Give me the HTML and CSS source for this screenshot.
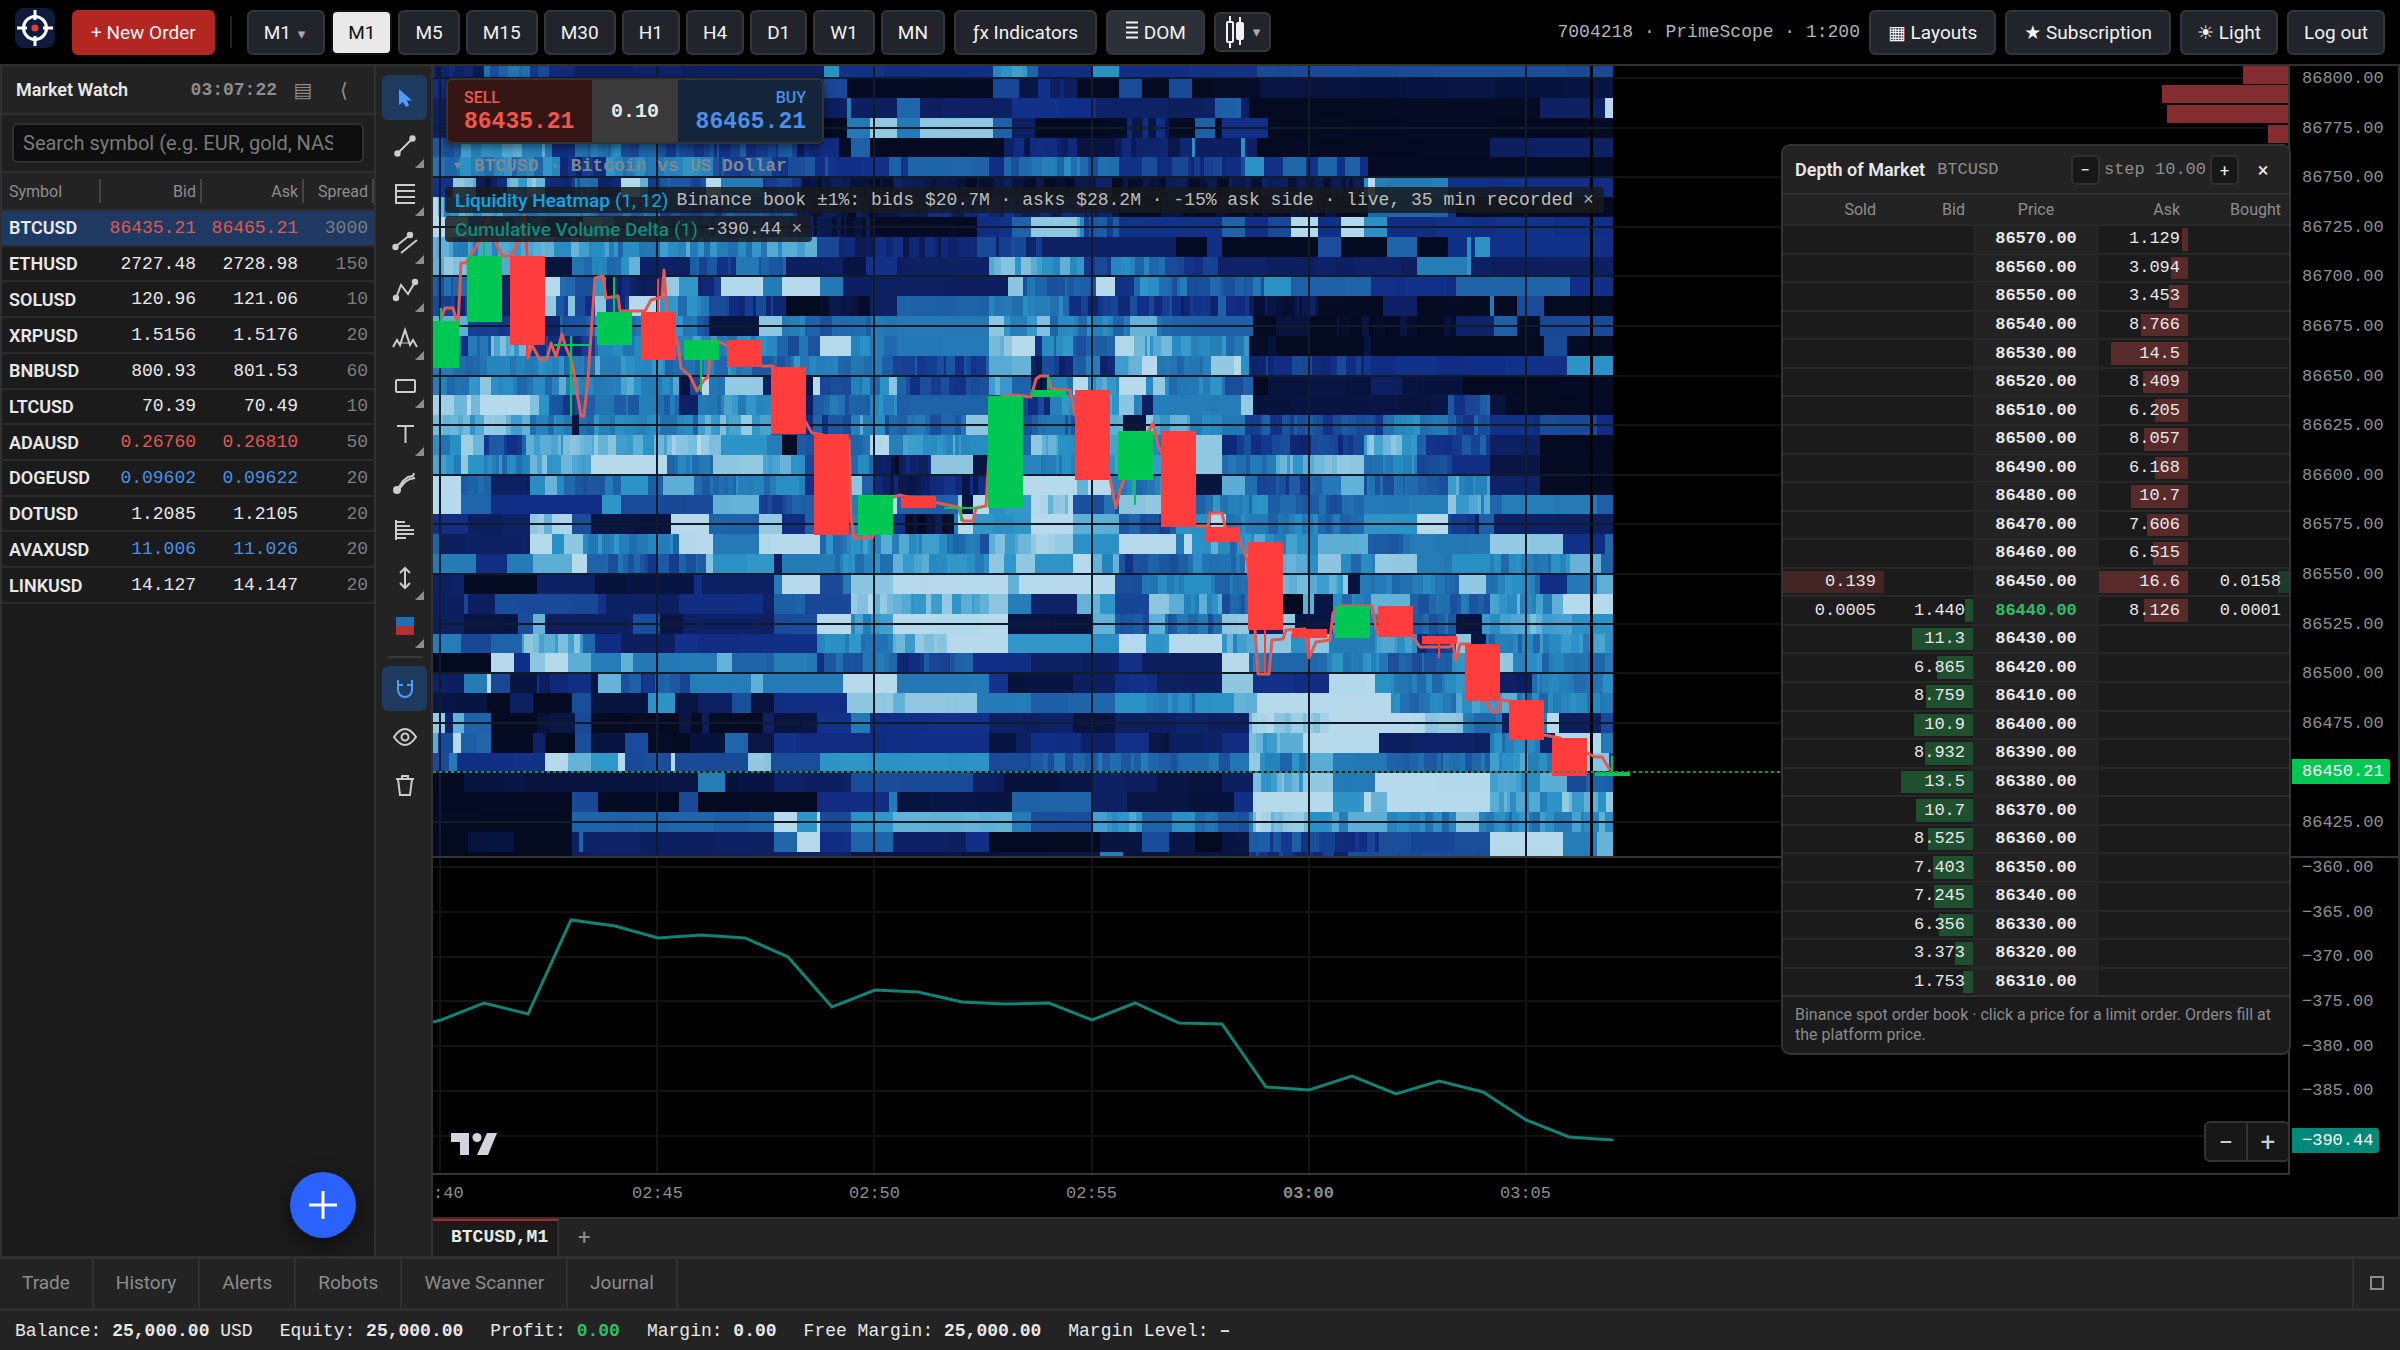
FILE: index.html
```html
<!DOCTYPE html>
<html lang="en">
<head>
<meta charset="utf-8">
<title>PrimeScope</title>
<link rel="stylesheet" href="styles.css">
</head>
<body>
<div class="app">
  <header class="topbar">
    <svg class="logo" viewBox="0 0 40 40" aria-hidden="true">
      <rect width="40" height="40" rx="9" fill="#0f1b3d"/>
      <circle cx="20" cy="20" r="11.500" fill="none" stroke="#fff" stroke-width="3"/>
      <path d="M20 2v10M20 28v10M2 20h10M28 20h10" stroke="#fff" stroke-width="3"/>
      <circle cx="20" cy="20" r="3.500" fill="#e23b35"/>
    </svg>
    <button class="btn primary">+ New Order</button>
    <span class="vsep"></span>
    <div class="frames">
      <button class="btn">M1 <small>▾</small></button>
      <button class="btn on">M1</button>
      <button class="btn">M5</button>
      <button class="btn">M15</button>
      <button class="btn">M30</button>
      <button class="btn">H1</button>
      <button class="btn">H4</button>
      <button class="btn">D1</button>
      <button class="btn">W1</button>
      <button class="btn">MN</button>
    </div>
    <div class="actions">
      <button class="btn wide">ƒx Indicators</button>
      <button class="btn wide lit"><svg width="14" height="18" viewBox="0 0 14 18"><path d="M1 1.500h12M1 6.500h12M1 11.500h12M1 16.500h12" stroke="#f2f2f2" stroke-width="2"/></svg> DOM</button>
      <button class="btn short" aria-label="Chart type">
        <svg width="20" height="34" viewBox="0 0 20 34" fill="none" stroke="#f2f2f2" stroke-width="2"><path d="M5 1v6M5 27v6M15 2v6M15 24v6"/><rect x="2" y="7" width="6" height="20" rx="1"/><rect x="12" y="8" width="6" height="16" rx="1" fill="#f2f2f2"/></svg>
        <small>▾</small>
      </button>
    </div>
    <span class="account">7004218 · PrimeScope · 1:200</span>
    <div class="actions">
      <button class="btn wide">▦ Layouts</button>
      <button class="btn wide">★ Subscription</button>
      <button class="btn">☀ Light</button>
      <button class="btn">Log out</button>
    </div>
  </header>

  <div class="main">
    <aside class="watch">
      <div class="watch-head">
        <h2>Market Watch</h2>
        <span class="clock">03:07:22</span>
        <button class="plain" aria-label="List view">▤</button>
        <button class="plain" aria-label="Collapse">⟨</button>
      </div>
      <div class="search"><input type="text" aria-label="Search symbol" placeholder="Search symbol (e.g. EUR, gold, NAS)"></div>
      <table class="quotes">
        <colgroup><col class="q-sym"><col class="q-bid"><col class="q-ask"><col class="q-spr"></colgroup>
        <thead><tr><th>Symbol</th><th>Bid</th><th>Ask</th><th>Spread</th></tr></thead>
        <tbody id="quotes"></tbody>
      </table>
      <button class="fab" aria-label="Add"><svg width="30" height="30" viewBox="0 0 30 30"><path d="M15 1v28M1 15h28" stroke="#fff" stroke-width="3"/></svg></button>
    </aside>

    <nav class="tools" aria-label="Drawing tools">
      <button class="tool on" aria-label="Cursor"><svg viewBox="0 0 24 24"><path d="M6 3v16l4-3 3 5 3-1.500-2-5h5z" fill="#4d9bff" stroke="none"/></svg></button>
      <button class="tool more" aria-label="Trend line"><svg viewBox="0 0 24 24"><path d="M5 19L19 5"/><circle cx="4.500" cy="19.500" r="2.200" fill="#ccc"/><circle cx="19.500" cy="4.500" r="2.200" fill="#ccc"/></svg></button>
      <button class="tool more" aria-label="Fibonacci"><svg viewBox="0 0 24 24"><path d="M2 3h20M2 9h20M2 15h20M2 21h20M3 3v18"/></svg></button>
      <button class="tool more" aria-label="Channel"><svg viewBox="0 0 24 24"><path d="M2 17L17 5M8 23L24 10"/><circle cx="2.500" cy="17" r="2.200" fill="#ccc"/><circle cx="17" cy="5" r="2.200" fill="#ccc"/></svg></button>
      <button class="tool more" aria-label="Wave"><svg viewBox="0 0 24 24"><path d="M3 20L8 7l7 9 7-12"/><circle cx="3" cy="20" r="2.200" fill="#ccc"/><circle cx="22" cy="4" r="2.200" fill="#ccc"/></svg></button>
      <button class="tool more" aria-label="Pattern"><svg viewBox="0 0 24 24"><path d="M0 21l4-7 3 5 5-15 5 15 3-5 4 7"/><path d="M5 17h13" stroke-width="1"/></svg></button>
      <button class="tool more" aria-label="Rectangle"><svg viewBox="0 0 24 24"><rect x="3" y="6" width="19" height="12" rx="1"/></svg></button>
      <button class="tool more" aria-label="Text"><svg viewBox="0 0 24 24"><path d="M4 4h17M12.500 4v17"/></svg></button>
      <button class="tool" aria-label="Brush"><svg viewBox="0 0 24 24"><path d="M4 20l6-9 5-4 5-1 1-3M6 19l6-7 5-3 5-1"/><circle cx="4" cy="20" r="3" fill="#ccc"/></svg></button>
      <button class="tool" aria-label="Volume profile"><svg viewBox="0 0 24 24"><path d="M3 2v20M3 4h9M3 8h14M3 12h18M3 16h18M3 20h10"/></svg></button>
      <button class="tool more" aria-label="Measure"><svg viewBox="0 0 24 24"><path d="M12 2v20M7 7l5-5 5 5M7 17l5 5 5-5"/></svg></button>
      <button class="tool more" aria-label="Position"><svg viewBox="0 0 24 24"><path d="M3 3h18v9H3z" fill="#1f6fb5" stroke="none"/><path d="M3 12h18v9H3z" fill="#b8302e" stroke="none"/></svg></button>
      <hr>
      <button class="tool on" aria-label="Magnet"><svg viewBox="0 0 24 24"><path d="M5 3v10a7 7 0 0 0 14 0V3M5 8h5M14 8h5" stroke="#4d9bff"/></svg></button>
      <button class="tool" aria-label="Hide drawings"><svg viewBox="0 0 24 24"><path d="M1 12q11-16 22 0q-11 16-22 0z"/><circle cx="12" cy="12" r="3.500"/></svg></button>
      <button class="tool" aria-label="Delete drawings"><svg viewBox="0 0 24 24"><path d="M3 6h18M9 6V3h6v3M5 6l2 16h10l2-16"/></svg></button>
    </nav>

    <section class="chart-area">
      <div class="chart">
        <div class="plot">
          <svg id="plot" viewBox="433 66 1855 1107" preserveAspectRatio="none" aria-label="BTCUSD chart"></svg>
          <div class="ticket">
            <button class="sell"><span>SELL</span><b>86435.21</b></button>
            <input type="text" aria-label="Volume" value="0.10">
            <button class="buy"><span>BUY</span><b>86465.21</b></button>
          </div>
          <div class="legend">
            <p class="symbol">▾ BTCUSD · Bitcoin vs US Dollar</p>
            <p class="study heat"><b>Liquidity Heatmap</b><i>(1, 12)</i><span>Binance book ±1%: bids $20.7M · asks $28.2M · -15% ask side · live, 35 min recorded</span><button class="plain" aria-label="Remove heatmap">×</button></p>
            <p class="study cvd"><b>Cumulative Volume Delta</b><i>(1)</i><span>-390.44</span><button class="plain" aria-label="Remove delta">×</button></p>
          </div>
          <svg class="tv" viewBox="0 0 46 24" aria-hidden="true"><path d="M0 1h18v22H9V10H0z M36 1h10l-9 22H26z" fill="#d1d4dc"/><circle cx="26" cy="5.500" r="4.500" fill="#d1d4dc"/></svg>
          <div class="zoom"><button aria-label="Zoom out">−</button><button aria-label="Zoom in">+</button></div>
        </div>
        <div class="scale">
          <div class="prices" id="prices"></div>
          <div class="deltas"><span>−360.00</span><span>−365.00</span><span>−370.00</span><span>−375.00</span><span>−380.00</span><span>−385.00</span><span></span></div>
          <span class="tag last">86450.21</span>
          <span class="tag delta">−390.44</span>
        </div>
        <div class="times"><span>:40</span><span>02:45</span><span>02:50</span><span>02:55</span><span><b>03:00</b></span><span>03:05</span></div>

        <section class="dom">
          <div class="dom-head">
            <h2>Depth of Market</h2><span class="sym">BTCUSD</span>
            <button class="step" aria-label="Smaller step">−</button><span class="stepv">step 10.00</span><button class="step" aria-label="Larger step">+</button>
            <button class="plain close" aria-label="Close">×</button>
          </div>
          <table>
            <colgroup><col class="d-o"><col class="d-i"><col class="d-p"><col class="d-i"><col class="d-o"></colgroup>
            <thead><tr><th>Sold</th><th>Bid</th><th>Price</th><th>Ask</th><th>Bought</th></tr></thead>
            <tbody id="dom"></tbody>
          </table>
          <p>Binance spot order book · click a price for a limit order. Orders fill at the platform price.</p>
        </section>
      </div>
      <div class="chart-tabs"><button class="ctab">BTCUSD,M1</button><button class="plain">+</button></div>
    </section>
  </div>

  <nav class="dock">
    <button>Trade</button><button>History</button><button>Alerts</button><button>Robots</button><button>Wave Scanner</button><button>Journal</button>
    <button class="max" aria-label="Maximise"><svg width="14" height="14" viewBox="0 0 14 14"><rect x="1" y="1" width="12" height="12" fill="none" stroke="#8a8a8a" stroke-width="2"/></svg></button>
  </nav>
  <footer class="status">
    <span>Balance: <b>25,000.00</b> USD</span><span>Equity: <b>25,000.00</b></span><span>Profit: <b class="up">0.00</b></span><span>Margin: <b>0.00</b></span><span>Free Margin: <b>25,000.00</b></span><span>Margin Level: <b>–</b></span>
  </footer>
</div>
<script src="app.js"></script>
</body>
</html>
```
FILE: styles.css
```css
* { box-sizing: border-box; }
body { margin: 0; background: #000; color: #e8e8e8; font-family: Roboto, "Liberation Sans", "DejaVu Sans", sans-serif; font-size: 19px; }
button, input { font: inherit; color: inherit; }
button { cursor: pointer; padding: 0; border: 0; background: none; }
h2, p { margin: 0; }
.app { display: flex; flex-direction: column; height: 100vh; }

.topbar { display: flex; align-items: center; flex: none; height: 66px; padding: 0 15px; border-bottom: 2px solid #303030; background: #000; }
.logo { width: 40px; height: 40px; margin: 0 17px 8px 0; }
.btn { height: 45px; padding: 0 15px; border: 2px solid #343638; border-radius: 6px; background: #21242a; color: #f2f2f2; white-space: nowrap; }
.btn small { margin-left: 2px; color: #aaa; font-size: 15px; }
.frames small { margin-right: 3px; }
.btn.primary { padding: 0 17px; border-color: #b32622; background: #b32622; }
.btn.on { border-color: #101010; background: #e9e9ea; color: #111; }
.btn.wide { padding: 0 17px; }
.btn.lit { background: #2c3138; }
.btn.short { display: flex; align-items: center; gap: 6px; height: 40px; padding: 0 9px; }
.vsep { width: 2px; height: 32px; margin: 0 15px; background: #222; }
.frames { display: flex; gap: 6px; }
.actions { display: flex; align-items: center; gap: 9px; margin-left: 9px; }
.account { margin-left: auto; color: #b4b4b4; }
.account, .clock, .quotes td, .legend, .status, .ctab { font-family: "Liberation Mono", "DejaVu Sans Mono", monospace; font-size: 18px; }

.main { display: flex; flex: 1; min-height: 0; }
.watch { position: relative; flex: none; width: 376px; border: solid #303030; border-width: 0 2px; background: #1b1b1b; }
.watch-head { display: flex; align-items: center; height: 49px; padding: 0 15px 0 14px; border-bottom: 2px solid #303030; background: #232323; }
.watch-head h2 { flex: 1; font-size: 18px; font-weight: 600; }
.clock { color: #8d8d8d; font-weight: 600; }
.plain { color: #8d8d8d; }
.watch-head .plain { width: 40px; margin-left: 6px; margin-right: -5px; font-size: 20px; }
.search { padding: 8px 10px; height: 58px; border-bottom: 2px solid #303030; background: #1f1f1f; }
.search input { display: block; width: 100%; height: 40px; padding: 0 29px 0 9px; border: 2px solid #303030; border-radius: 6px; background: #0e0e0e; font-size: 20px; }
.search input::placeholder { color: #7a7a7a; }
.quotes { width: 100%; height: 431px; border-collapse: collapse; table-layout: fixed; }
.q-sym { width: 99px; } .q-bid { width: 101px; } .q-ask { width: 102px; } .q-spr { width: 70px; }
.quotes thead tr { height: 37px; background: #232323; }
.quotes th { padding: 0 6px; color: #8d8d8d; font-size: 16px; font-weight: 400; text-align: right; background: linear-gradient(#444, #444) right / 2px 24px no-repeat; }
.quotes th:first-child, .quotes td:first-child { padding-left: 7px; text-align: left; }
.quotes td { padding: 0 6px; border-top: 2px solid #2b2b2b; border-bottom: 2px solid #2b2b2b; text-align: right; }
.quotes td:first-child { font-family: Roboto, sans-serif; font-weight: 600; padding-right: 0; }
.quotes td:last-child { color: #7d7d7d; }
.quotes .sel { background: #1e3a63; }
.quotes .dn { color: #e0574f; } .quotes .bl { color: #4a90e2; }
.fab { position: absolute; right: 18px; bottom: 18px; display: grid; place-items: center; width: 66px; height: 66px; border-radius: 50%; background: #2962ff; box-shadow: 0 6px 18px rgba(0,0,0,.5); }

.tools { display: flex; flex-direction: column; align-items: center; gap: 3px; flex: none; width: 57px; padding: 9px 0 0 2px; border-right: 2px solid #303030; background: #232323; }
.tool { position: relative; display: grid; place-items: center; flex: none; width: 45px; height: 45px; border-radius: 6px; }
.tool svg { width: 24px; height: 24px; fill: none; stroke: #ccc; stroke-width: 2; overflow: visible; }
.tool.on { background: #1f3a5f; }
.tool.more::after { content: ""; position: absolute; right: 3px; bottom: 0; border: solid transparent; border-width: 0 0 9px 9px; border-bottom-color: #8d8d8d; }
.tools hr { width: 34px; height: 2px; margin: 5px 0; border: 0; background: #3a3a3a; }

.chart-area { display: flex; flex-direction: column; flex: 1; min-width: 0; }
.chart { position: relative; display: grid; grid-template: 1fr 42px / 1fr 108px; flex: 1; min-height: 0; border-right: 2px solid #303030; background: #000; }
.plot { position: relative; min-height: 0; border: solid #363636; border-width: 0 2px 2px 0; }
#plot { position: absolute; inset: 0; width: 100%; height: 100%; }
.scale { position: relative; font: 17px "Liberation Mono", monospace; line-height: 20px; color: #8f8f8f; }
.prices, .deltas { display: flex; flex-direction: column; justify-content: space-between; padding-left: 12px; }
.prices { height: 767px; padding-top: 3px; }
.deltas { height: 290px; margin-top: 23px; border-top: 2px solid #363636; }
.prices span, .deltas span { height: 20px; }
.tag { position: absolute; left: 2px; height: 25px; padding: 0 6px 0 10px; border-radius: 0 3px 3px 0; line-height: 25px; color: #fff; }
.last { top: 693px; background: #00c853; }
.delta { top: 1062px; background: #00897b; }
.times { display: flex; overflow: hidden; font: 17px "Liberation Mono", monospace; line-height: 38px; color: #8f8f8f; text-align: center; }
.times span { flex: none; width: 217px; }
.times span:first-child { width: 116px; text-align: left; }

.ticket { position: absolute; left: 13px; top: 12px; display: flex; width: 378px; height: 66px; border: 2px solid #333; border-radius: 6px; overflow: hidden; background: #3a3a3a; box-shadow: 0 3px 8px rgba(0,0,0,.5); }
.ticket button { display: flex; flex-direction: column; justify-content: center; flex: none; width: 144px; padding: 0 16px; gap: 4px; line-height: 24px; }
.ticket span { font-size: 16px; font-weight: 500; line-height: 17px; }
.ticket b { font: bold 23px "Liberation Mono", monospace; line-height: 24px; }
.ticket .sell { color: #f0564d; background: #351614; align-items: flex-start; }
.ticket .buy { color: #4a90e8; background: #14243a; align-items: flex-end; }
.ticket input { flex: 1; min-width: 0; padding: 0; border: 0; background: #3a3a3a; font: bold 20px "Liberation Mono", monospace; text-align: center; }
.legend { position: absolute; left: 12px; top: 87px; display: flex; flex-direction: column; align-items: flex-start; gap: 3px; }
.symbol { height: 31px; padding-left: 7px; color: #7f8891; font-weight: bold; line-height: 26px; }
.study { display: flex; align-items: center; height: 26px; padding: 0 10px; border-radius: 4px; background: rgba(24,26,28,.84); white-space: pre; color: #bdbdbd; }
.study b, .study i { font-family: Roboto, sans-serif; font-size: 19px; font-style: normal; font-weight: 500; }
.study i { font-weight: 400; margin: 0 8px 0 5px; }
.study .plain { margin-left: 10px; color: #aaa; }
.heat b, .heat i { color: #0ea5e9; }
.cvd b, .cvd i { color: #0b8f7c; }
.tv { position: absolute; left: 18px; bottom: 17px; width: 46px; height: 24px; }
.zoom { position: absolute; right: -2px; bottom: 11px; display: flex; border: 2px solid #333; border-radius: 6px; background: #171717; }
.zoom button { width: 40px; height: 37px; font-size: 26px; color: #ccc; }
.zoom button + button { width: 42px; border-left: 2px solid #333; }

.dom { position: absolute; right: 107px; top: 78px; width: 510px; border: 2px solid #333; border-radius: 9px; background: #1b1b1b; overflow: hidden; }
.dom-head { display: flex; align-items: center; height: 49px; padding: 0 19px 0 12px; border-bottom: 2px solid #303030; background: #232323; }
.dom-head h2 { font-size: 18px; font-weight: 600; }
.sym, .stepv { font: 17px "Liberation Mono", monospace; color: #8d8d8d; }
.sym { flex: 1; margin-left: 12px; }
.stepv { margin: 0 4px; }
.step { width: 29px; height: 30px; border: 2px solid #303030; border-radius: 5px; background: #171717; font-size: 17px; }
.close { width: 14px; margin-left: 17px; color: #eee; font-size: 20px; }
.dom table { width: 100%; height: 800px; border-collapse: collapse; table-layout: fixed; }
.d-o { width: 101px; } .d-i { width: 89px; } .d-p { width: 126px; }
.dom thead tr { height: 30px; background: #232323; }
.dom th { padding: 0 8px; color: #8d8d8d; font-size: 16px; font-weight: 400; text-align: right; }
.dom th:nth-child(3) { text-align: center; }
.dom td { position: relative; padding: 0 8px; border-top: 2px solid #282828; font: 17px "Liberation Mono", monospace; line-height: 20px; text-align: right; }
.dom td:nth-child(3) { padding: 0; background: #232323; font-weight: bold; text-align: center; }
.dom .bar { position: absolute; right: 0; top: 2px; bottom: 2px; }
.dom .bar + span { position: relative; }
.c1 .bar { background: #432525; } .c2 .bar { background: #1f4f2f; } .c4 .bar { background: #592a2a; } .c5 .bar { background: #1e3a28; }
.up { color: #2fbf64; }
.dom p { padding: 8px 12px; border-top: 2px solid #303030; color: #8a8a8a; font-size: 16px; line-height: 20px; }

.chart-tabs { display: flex; flex: none; height: 39px; border-top: 2px solid #303030; background: #232323; }
.ctab { padding: 0 9px 3px 18px; border-top: 2px solid #b32622; border-right: 2px solid #303030; background: #1b1b1b; font-weight: bold; }
.chart-tabs .plain { width: 50px; font-size: 22px; }
.dock { display: flex; flex: none; height: 52px; border-top: 3px solid #303030; background: #232323; color: #8d8d8d; }
.dock button { padding: 0 22px 3px; border-right: 2px solid #303030; }
.dock .max { width: 48px; padding: 0; margin-left: auto; border-left: 2px solid #303030; border-right: 0; }
.status { display: flex; gap: 27px; flex: none; height: 42px; padding: 0 15px; border-top: 3px solid #303030; background: #232323; line-height: 40px; white-space: pre; }
```
FILE: app.js
```js
const quotes = [
  ["BTCUSD", "86435.21", "86465.21", 3000, "dn"], ["ETHUSD", "2727.48", "2728.98", 150, ""],
  ["SOLUSD", "120.96", "121.06", 10, ""], ["XRPUSD", "1.5156", "1.5176", 20, ""],
  ["BNBUSD", "800.93", "801.53", 60, ""], ["LTCUSD", "70.39", "70.49", 10, ""],
  ["ADAUSD", "0.26760", "0.26810", 50, "dn"], ["DOGEUSD", "0.09602", "0.09622", 20, "bl"],
  ["DOTUSD", "1.2085", "1.2105", 20, ""], ["AVAXUSD", "11.006", "11.026", 20, "bl"],
  ["LINKUSD", "14.127", "14.147", 20, ""]
];
document.getElementById("quotes").innerHTML = quotes.map((q, i) =>
  `<tr class="${i ? "" : "sel"}"><td>${q[0]}</td><td class="${q[4]}">${q[1]}</td><td class="${q[4]}">${q[2]}</td><td>${q[3]}</td></tr>`).join("");

const asks = ["1.129", "3.094", "3.453", "8.766", "14.5", "8.409", "6.205", "8.057", "6.168", "10.7", "7.606", "6.515", "16.6", "8.126"];
const bids = ["1.440", "11.3", "6.865", "8.759", "10.9", "8.932", "13.5", "10.7", "8.525", "7.403", "7.245", "6.356", "3.373", "1.753"];
const sold = { 12: "0.139", 13: "0.0005" }, bought = { 12: "0.0158", 13: "0.0001" };
const cell = (c, v, max) => {
  if (!v) return "<td></td>";
  const w = Math.round(v / max * 100);
  return `<td class="${c}">${w ? `<i class="bar" style="width:${w}%"></i>` : ""}<span>${v}</span></td>`;
};
let book = "";
for (let i = 0; i < 27; i++) {
  book += `<tr>${cell("c1", sold[i], 0.139)}${cell("c2", bids[i - 13], 16.6)}<td class="${i === 13 ? "up" : ""}">${86570 - i * 10}.00</td>${cell("c4", asks[i], 16.6)}${cell("c5", bought[i], 0.139)}</tr>`;
}
document.getElementById("dom").innerHTML = book;

let scale = "";
for (let p = 86800; p >= 86425; p -= 25) scale += `<span>${p === 86450 ? "" : p + ".00"}</span>`;
document.getElementById("prices").innerHTML = scale;

/* Resting liquidity per price row: level (0-9, a) then the column it runs to; "~" marks a busy stretch. */
const heat = [
"2~14 5~26 3~38 2:103 7:107 3:147 7~156 5:159 3:173 7:180 3:216 4:309",
"3:103 4:109 0:147 4:154 1:159 2~169 0:180 4:186 0:193 4:199 0:217 1:309",
"2:109 6:110 2:122 5:128 2:152 3:174 2:205 5:212 2:214 0:290 2:307 a:309",
"2:103 0:109 6:115 9:122 6:128 9:147 5:152 2:158 0:182 2~193 0:200 5:205 0:207 3:219 0:309",
"5~8 7~32 3:38 6~50 4~96 2~107 0:110 5:115 0:150 2~169 1:179 2~199 7:200 2:212 7:213 2:216 0:277 2:309",
"6~34 3~46 6~74 4~106 3:120 5:123 3:125 5:146 3:150 4~154 6~172 5~180 3:186 4:190 3:194 4:198 3~213 7:218 3:223 5:229 3:232 5:237 3:239 5:243 3:245 0:309",
"3:6 8~12 2~20 8~30 3~38 5~44 3~50 a:55 8:57 4~72 a:76 6:87 3~97 1~244 7:245 a:247 6:266 3:309",
"a:2 7~20 5~60 4~96 1~122 2~180 0~245 5:266 3:268 0:309",
"a:10 5~30 3~40 8~48 4~96 3:100 1~115 0:143 3:152 5:157 9:169 7~171 4~180 3:207 5:213 3:219 4:225 a:232 3:238 a:244 7:250 3:309",
"8~6 6~10 7~29 7~49 6~60 7~68 6~88 7~98 8:101 4:107 2~143 3~160 2:195 0:203 3:207 0:232 4:238 0:250 5:258 0:266 3:271 7:272 3:273 7:277 3:309",
"8~10 7~30 1:37 6~52 8:55 2:68 4~80 6:86 4~93 2:108 1:114 3:122 2:146 8~160 7~171 3~178 6~192 3~206 2:258 6:271 7:272 2:309",
"5~10 2:30 a:34 6~38 4:43 7:46 2~61 9:65 7:70 3~76 a:87 6:92 a:102 6:108 2:151 9:155 5~174 a:179 3:184 6~194 5~218 7:225 5:246 3:268 5:298 3:309",
"3~10 2:30 9:33 4~36 9:38 3~43 9:46 3~52 a:60 6~73 4:78 3~93 0:102 1~115 2:122 5:146 6~167 3~206 5:208 3~214 1~232 0:249 2:258 0:277 6:278 0:284 4:291 0:309",
"8:10 3~34 4~43 6~66 5~73 1:86 9:92 6~98 5:102 5~122 6:146 9:150 6~156 8~162 6~183 8:190 6~194 5:215 0:221 1:230 0~268 2:278 5:284 0:290 4:309",
"2:3 7~8 3:10 5~16 8~26 3~43 6~60 7~75 6~92 5~102 a:110 6~122 6:146 8~152 a:158 2~160 6~168 5~179 a:184 8~194 7~208 6~214 0:219 1:221 0:244 1:246 0:291 4:297 0:303 5:304 0:309",
"6~43 7~58 6~80 5~95 6~110 5~121 4~146 7~152 8:157 1~160 3~168 5~175 3~179 7~186 a:190 6~204 9:210 a:212 7:214 3~244 4~246 3:297 7:303 3:304 7:309",
"6~13 9:16 6~32 7~65 1:68 4:71 a:73 6~77 9:87 2:89 5:98 1:100 a:102 4~110 6~120 9:122 4~146 7~152 5:157 1~162 6~168 a:172 7~180 a:187 6~189 9:192 6~207 5~215 0:219 1:246 2:254 1:270 0:309",
"9~16 a:26 8~31 4~43 6~48 5~65 2:70 6~76 7~89 4:98 2:100 5~115 6~122 5:146 3~162 7~180 9:184 7~186 2:189 6:212 9:215 1:266 4~277 1:281 0:309",
"8~26 6~37 1:39 5~41 6~70 8~89 4:98 3:100 4~110 7~119 5~140 9:146 5~172 7~181 1:187 9:189 7~207 6:213 4~249 6~266 4~277 3:290 4:305 3:309",
"6~8 9~14 4~25 8~62 9~76 7:88 6:92 0:96 5~110 6~115 a:120 7~146 5:157 9:160 7~180 6~199 9:207 3~244 8~258 4~277 2:290 0:309",
"7~8 9:10 7:14 6~26 8~42 a:62 6~74 9:87 7~98 4:110 6~116 1~124 2~131 9:142 1:146 6~175 7~200 9:207 5~221 8~237 9:244 6~258 4~267 3:277 1:290 0:309",
"a:8 5~16 2:26 7~35 5~50 7:57 5:61 8:69 5~80 6~98 3:110 9:113 5~116 2~146 a:169 8:172 a:178 6~200 1:207 8:213 6~216 4~233 6:238 8:244 5~266 7~277 2:290 0:309",
"a:8 5:16 3:45 7:50 4:74 8:86 4~98 5:110 6~121 a:122 5:138 9:139 1:142 a:146 7:157 9~168 5~180 9:191 7~200 6~216 7:219 5~244 6:266 9:268 7~277 5:280 6:305 5:309",
"3:10 2:26 9~37 4:42 1:63 a:73 5:86 9:92 3:98 5~110 7~121 3:124 1~137 6:138 a:142 7:157 a:168 8:180 4~195 7:204 a:208 6~232 5~244 7:258 a:266 3~274 5:278 2:309",
"5:3 2:26 a:32 7:35 9:40 6~65 a:74 6:86 a:102 6~109 7~135 5~146 8~157 9~168 7:180 a:195 6:197 a:199 7:204 8:206 6~213 7~232 8:245 5~256 6:277 9:296 3:307 5:309",
"6:12 3:20 6:27 8:37 a:41 5~55 4~72 9:74 7:90 2:92 6:105 6~121 7~146 9:150 7:153 9:158 7:168 a:173 7~180 4~198 6~213 7~232 9:238 6~247 9:258 6:267 7:277 6~298 8:306 5:309",
"2:9 0:28 2:43 1:69 3:71 2:90 6:92 a:102 4:108 6:110 9:121 a:151 8:154 a:179 4:186 6~197 7:204 5~214 8~240 1:243 6:246 6~269 9:276 6~290 3:297 6:305 8:309",
"2:9 4:10 2:17 4:44 3:46 2:65 3:87 2:90 5:98 4:110 9~121 8~146 9:151 6:157 2:169 8:175 7:179 4:188 9:193 7~207 5~223 0:228 8:231 1:236 6~246 8:256 5~277 7~296 a:309",
"2:9 1:23 4:27 8:30 2:53 4:60 1:66 2:90 4:101 a:110 7~121 a:151 1:173 8:179 4~188 8:192 5~207 9:214 2:223 9:226 1:236 7~250 5~268 1:275 7~285 8~300 7:309",
"6:8 4:16 5:24 8~40 5:43 3:50 2:64 3:101 6~121 8~135 a:151 7:180 a:187 7:193 a:207 7~216 9:225 7:230 9:235 6:247 7~258 3~268 9:272 1:276 6~290 7~309",
"0:16 a:22 3:26 9:30 a:36 8:42 6:50 8:53 6:75 8:79 5:90 6:101 3:103 5~122 3~128 4~142 3:157 2:180 3:186 2:207 a:214 6~222 5:232 6~248 5~267 7~277 9:283 6~309",
"2:9 6:15 a:16 4:21 1:28 2~36 3:42 1:44 8:50 4~68 6:84 8:87 6:108 a:122 6:146 3:151 1:168 2:179 3:190 2:207 9:215 3:235 a:247 7:251 6~268 7:275 2:288 6~309",
"1:15 0:21 2:27 0:37 4:42 1:57 7:64 1:70 2:79 4:84 1:90 3:109 9:121 8:124 9:143 6:157 5:179 7:187 6~200 7:210 8:216 a:251 6~268 7~280 8:284 6~309",
"9:4 2:6 8:9 5:16 0:28 1:38 4:42 0:65 1~73 0:87 2:90 1:101 3:110 6:115 3:146 2:168 1:179 2:214 9~235 a:260 9:270 6~280 2:284 7~292 a:295 2:306 4:309",
"8:2 4:6 a:8 5:16 0:27 2:30 0:38 4:42 1:51 4:57 0:68 1:77 5:83 1:90 3:146 1:153 2:157 3:170 2:179 3:188 1:193 2:207 3:214 8~222 8:228 a:248 2:277 6~290 2:294 a:306 6:309",
"4:5 6:7 3:30 a:36 8:42 7:49 a:51 4:63 a:64 4:83 9:89 4:102 7:146 4:157 5~214 9:217 6~230 8:236 6:250 5~277 7~292 6:300 9:308 4:309",
"0:9 1:70 6:77 1:90 2:110 4:142 2:150 1:173 2:190 1:207 2:215 8~228 9:236 6:247 a:277 7~290 8:297 4:302 5:309",
"0:37 4:44 0:65 4:70 0:101 3:120 6:122 1:152 5:173 2:182 1:210 3:215 a:236 7:244 a:246 8:250 a:277 7~292 8~309",
"0:37 5:90 a:96 7:101 a:102 4:110 7:121 8:152 6:157 4:173 7~186 5:194 7:200 5~215 9~230 7~240 8:250 6~268 9:274 6~290 7~309",
"0:10 1:22 0:37 2:39 5:40 2:90 5:96 a:102 3:110 5:121 2:140 3:146 0:175 1:186 4:193 1:200 0:207 1:214 4~230 3~248 4:277 a:296 6:305 8:309",
"0:37 2:110 1:175 6:181 1:214 3~240 4:277 a:296 6:305 8:309"
];
const ramp = [[4,10,32],[8,20,64],[13,32,98],[17,46,134],[25,74,152],[30,98,168],[36,122,182],[42,146,198],[96,176,214],[142,198,224],[182,218,236]];
const shade = v => {
  v = Math.max(0, Math.min(10, v));
  const i = Math.min(9, Math.floor(v)), f = v - i;
  return "rgb(" + ramp[i].map((c, k) => Math.round(c + (ramp[i + 1][k] - c) * f)) + ")";
};
let seed = 7;
const rnd = () => (seed = (seed * 16807) % 2147483647) / 2147483647;
const L = 433, colX = u => Math.round(430 + u * 3.827);
let out = "";
const rect = (x, y, w, h, fill) => { out += `<rect x="${x}" y="${y}" width="${w}" height="${h}" fill="${fill}" shape-rendering="crispEdges"/>`; };
heat.forEach((row, r) => {
  const y0 = r ? Math.round(78 + (r - 1) * 19.84) : 65, y1 = Math.min(856, Math.round(78 + r * 19.84));
  let x = L;
  row.split(" ").forEach(t => {
    const lv = t[0] === "a" ? 10 : +t[0], end = colX(+t.slice(2)), busy = t[1] === "~";
    while (x < end) {
      const w = busy ? 2 + Math.round(rnd() * 10) : 12 + Math.round(rnd() * 50);
      const x1 = end - x - w < 3 ? end : x + w;
      rect(x, y0, x1 - x, y1 - y0, shade(lv + (rnd() - .45) * (busy ? 2.2 : .3)));
      x = x1;
    }
  });
});
rect(1590, 65, 3, 791, "#02040a");
const line = (x1, y1, x2, y2, c, w, extra = "") => { out += `<line x1="${x1}" y1="${y1}" x2="${x2}" y2="${y2}" stroke="${c}" stroke-width="${w}" ${extra}/>`; };
for (let i = 0; i < 16; i++) { const y = Math.round(78 + i * 49.6); line(L, y, 1612, y, "#101c2a", 2); line(1612, y, 2288, y, "#131313", 2); }
for (let i = 0; i < 7; i++) { const y = Math.round(867 + i * 44.8); line(L, y, 2288, y, "#131313", 2); }
for (let i = 0; i < 6; i++) { const x = Math.round(440 + i * 217.2); line(x, 65, x, 856, "#101c2a", 2); line(x, 856, x, 1175, "#131313", 2); }
[[2243, 66, 18], [2162, 85, 18], [2167, 105, 18], [2268, 125, 18]].forEach(b => rect(b[0], b[1], 2288 - b[0], b[2], "#842c2f"));
line(L, 857, 2288, 857, "#363636", 2);

const trace = "441,319 445,308 453,308 458,325 461,263 466,263 480,240 488,218 497,246 503,256 511,256 517,245 524,216 527,256 528,358 532,345 540,360 547,359 551,343 556,357 562,334 565,345 572,362 581,416 584,416 588,378 595,278 603,276 606,298 618,296 620,311 645,311 651,300 662,297 664,270 667,312 678,345 681,368 690,376 697,391 704,380 708,377 712,340 722,343 728,346 762,366 773,366 812,433 849,440 851,517 854,538 872,538 891,498 900,495 903,496 958,507 963,521 973,521 976,508 986,506 989,455 1000,397 1013,395 1031,397 1036,379 1040,376 1048,376 1051,389 1070,390 1075,415 1110,478 1116,508 1120,490 1124,480 1153,423 1158,445 1195,526 1208,526 1210,513 1222,513 1225,526 1240,541 1247,560 1255,629 1258,674 1269,674 1272,640 1283,639 1286,630 1305,629 1309,658 1316,642 1330,640 1333,613 1340,606 1372,606 1377,632 1413,636 1420,647 1450,647 1453,644 1456,661 1460,644 1470,644 1485,701 1493,712 1498,712 1501,700 1510,701 1544,735 1560,738 1595,757 1602,757 1610,770";
out += `<polyline points="${trace}" fill="none" stroke="#df5a55" stroke-width="3" stroke-linejoin="round"/>`;

/* top, bottom, side, high, low */
const candles = [[321,368,"g",308,0],[256,322,"g",238,0],[256,345,"r",225,358],[344,346,"g",336,416],[312,345,"g",277,0],[312,360,"r",279,0],[340,360,"g",0,392],[340,367,"r",0,0],[367,434,"r",0,0],[434,535,"r",0,0],[495,535,"g",0,0],[496,508,"r",0,0],[507,509,"g",0,521],[396,508,"g",0,0],[390,397,"g",375,0],[390,480,"r",0,0],[431,480,"g",0,505],[431,527,"r",0,0],[527,542,"r",0,0],[542,630,"r",0,674],[629,638,"r",0,659],[606,638,"g",0,0],[606,637,"r",0,0],[636,644,"r",0,658],[644,701,"r",0,0],[700,740,"r",0,0],[738,776,"r",0,0],[772,776,"g",756,0]];
candles.forEach((c, i) => {
  const x = Math.round(440.6 + i * 43.4), col = c[2] === "g" ? "#00c853" : "#ff3d3d", x0 = Math.max(L, x - 17);
  line(x, c[3] || c[0], x, c[4] || c[1], col, 2);
  rect(x0, c[0], x + 18 - x0, c[1] - c[0], col);
});
line(L, 772, 2288, 772, "#0a9a4a", 2, 'stroke-dasharray="3 3"');

const cvd = [1020,1003,1014,920,926,938,935,938,957,1007,990,992,1002,1004,1003,1020,1003,1023,1024,1087,1090,1076,1094,1081,1092,1120,1137,1140];
out += `<polyline points="433,1022 ${cvd.map((y, i) => Math.round(441 + i * 43.4) + "," + y).join(" ")}" fill="none" stroke="#0f8374" stroke-width="3"/>`;
document.getElementById("plot").innerHTML = out;
```
